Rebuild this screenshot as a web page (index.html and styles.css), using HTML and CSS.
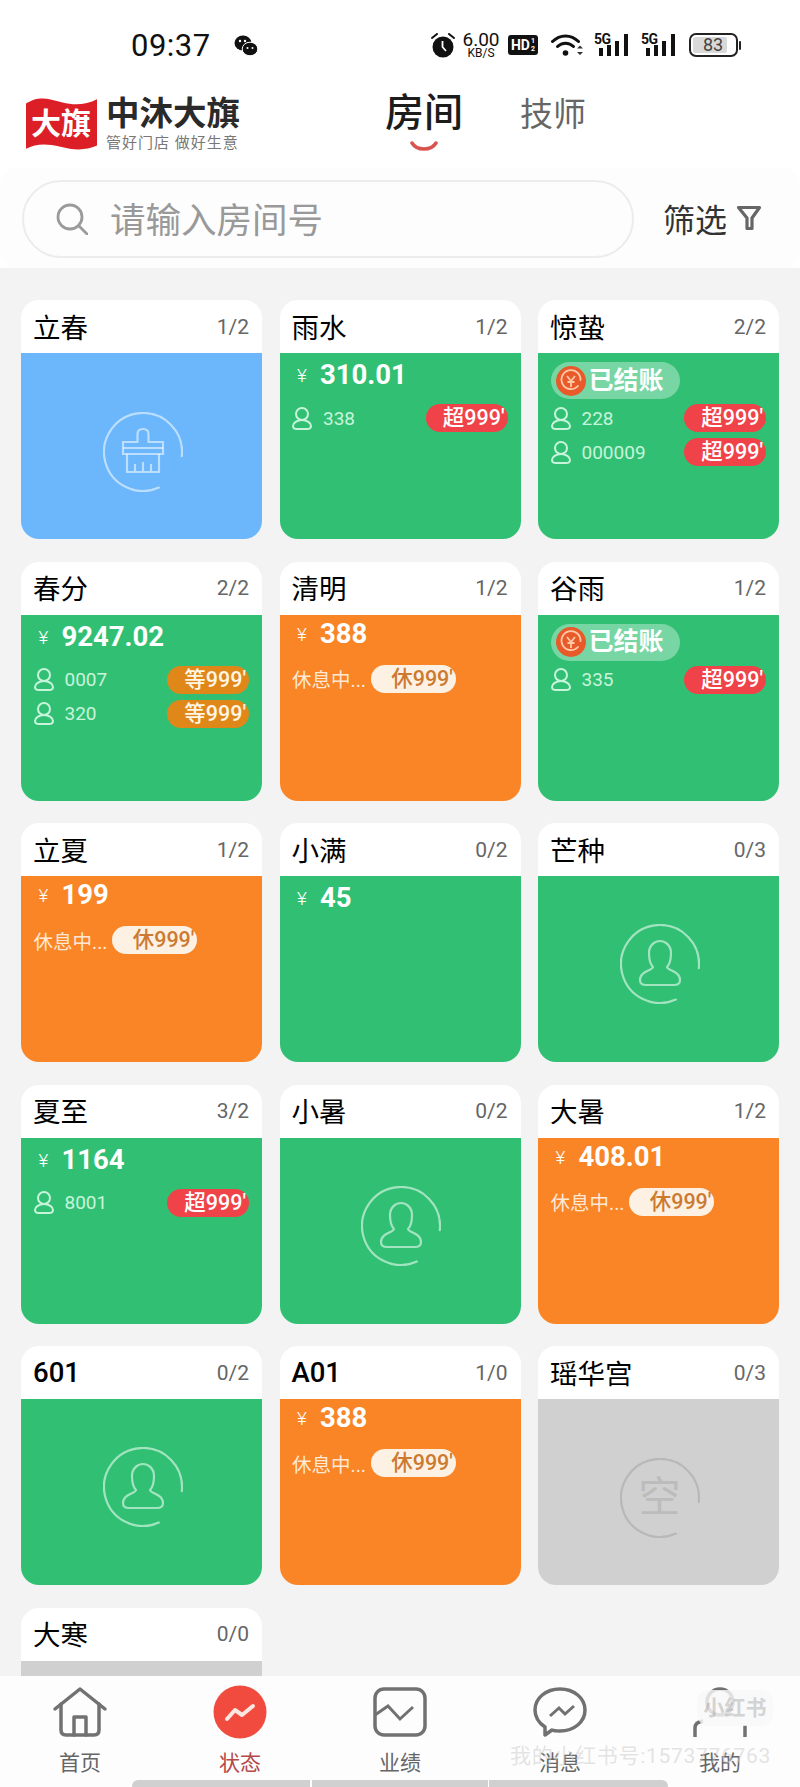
FILE: index.html
```html
<!DOCTYPE html>
<html lang="zh-CN">
<head>
<meta charset="utf-8">
<title>房间状态</title>
<link rel="stylesheet" href="styles.css">
</head>
<body>
<svg class="defs" aria-hidden="true">
  <symbol id="ring" viewBox="0 0 80 80"><path d="M55.9 75.6A39 39 0 1 1 78.8 44.1" fill="none" stroke="currentColor" stroke-width="2.200" stroke-linecap="round"/></symbol>
  <symbol id="guest" viewBox="0 0 80 80"><path d="M33 43C29 39 29 33 29 29C29 22 34 17 40 17C46 17 51 22 51 29C51 33 51 39 47 43C48 47 60 47 60 56C60 60 57 61 54 61L26 61C23 61 20 60 20 56C20 47 32 47 33 43Z" fill="none" stroke="currentColor" stroke-width="2.200"/></symbol>
  <symbol id="broom" viewBox="0 0 80 80"><g fill="none" stroke="currentColor" stroke-width="2.200"><path d="M34.500 30V22Q34.500 17 40 17Q45.500 17 45.500 22V30H60V42H20V30Z"/><path d="M20 36H60"/><path d="M24 42V60H56V42M32 60V52M40 60V50M48 60V52"/></g></symbol>
  <symbol id="user" viewBox="0 0 20 23"><g fill="none" stroke="currentColor" stroke-width="2"><circle cx="10" cy="7" r="6"/><path d="M10 13C5 13 1 16 1 19C1 21 3 22 5 22H15C17 22 19 21 19 19C19 16 15 13 10 13Z"/></g></symbol>
  <symbol id="paid" viewBox="0 0 30 30"><circle cx="15" cy="15" r="15" fill="#e85a2a"/><path d="M22 20A9.500 9.500 0 1 1 24.500 14" fill="none" stroke="#ffc9a8" stroke-width="1.800" stroke-linecap="round"/><path d="M11 10L15 15L19 10M15 15V21M11.500 16H18.500" fill="none" stroke="#ffc9a8" stroke-width="1.800"/></symbol>
</svg>

<header class="top">
  <div class="status">
    <span class="time">09:37</span>
    <svg class="wechat" viewBox="0 0 24 21"><ellipse cx="9" cy="8" rx="8.500" ry="7.500" fill="#111"/><ellipse cx="16" cy="14" rx="7.800" ry="6.800" fill="#111" stroke="#fff" stroke-width="1"/><circle cx="6" cy="6" r="1.200" fill="#fff"/><circle cx="11" cy="6" r="1.200" fill="#fff"/><circle cx="13.500" cy="13" r="1" fill="#fff"/><circle cx="18.500" cy="13" r="1" fill="#fff"/></svg>
    <span class="status-right">
      <svg class="alarm" viewBox="0 0 24 25"><circle cx="12" cy="14" r="10.500" fill="#111"/><path d="M1 5L6 1M23 5L18 1" stroke="#111" stroke-width="2" stroke-linecap="round"/><path d="M11.500 8V14L15 18" fill="none" stroke="#fff" stroke-width="1.800"/></svg>
      <span class="speed"><b>6.00</b><i>KB/S</i></span>
      <span class="hd">HD<span class="hd-frac">1<br>2</span></span>
      <svg class="wifi" viewBox="0 0 33 25"><g fill="none" stroke="#111" stroke-width="3" stroke-linecap="round"><path d="M1.500 8.500C9 1 20 1 27.500 8.500"/><path d="M6.500 13.500C11 9 18 9 22.500 13.500"/></g><circle cx="14.500" cy="20" r="2.800" fill="#111"/><path d="M26 15.500L29 12.500L32 15.500ZM26 19L29 22L32 19Z" fill="#333"/></svg>
      <span class="sim"><span class="sim-label">5G</span><svg class="bars" viewBox="0 0 29 22"><path d="M0 14h4v8H0zM8 11h4v11H8zM16 7h4v15h-4zM25 0h4v22h-4z" fill="#111"/></svg></span>
      <span class="sim"><span class="sim-label">5G</span><svg class="bars" viewBox="0 0 29 22"><path d="M0 14h4v8H0zM8 11h4v11H8zM16 7h4v15h-4zM25 0h4v22h-4z" fill="#111"/></svg></span>
      <span class="battery"><span class="battery-level">83</span></span><span class="battery-tip"></span>
    </span>
  </div>
  <div class="brandbar">
    <div class="logo">
      <svg class="logo-flag" viewBox="0 0 70 50" preserveAspectRatio="none"><path d="M0 6C14 -2 22 2 36 5C48 8 60 7 70 2V45C58 50 46 49 34 46C20 43 10 43 0 48Z" fill="#dc1f26"/></svg>
      <span class="logo-text">大旗</span>
    </div>
    <div class="brand">
      <span class="brand-name">中沐大旗</span>
      <span class="brand-sub">管好门店 做好生意</span>
    </div>
    <nav class="tabs">
      <span class="tab tab-on">房间<svg class="smile" viewBox="0 0 28 11"><path d="M2 2C7 10 21 10 26 2" fill="none" stroke="#d9534f" stroke-width="3.500" stroke-linecap="round"/></svg></span>
      <span class="tab">技师</span>
    </nav>
  </div>
  <div class="searchbar">
    <div class="search">
      <svg class="search-icon" viewBox="0 0 32 32"><circle cx="14" cy="14" r="12" fill="none" stroke="#9a9a9a" stroke-width="2.800"/><path d="M23 23L31 31" stroke="#9a9a9a" stroke-width="2.800" stroke-linecap="round"/></svg>
      <span class="placeholder">请输入房间号</span>
    </div>
    <div class="filter">筛选<svg class="filter-icon" viewBox="0 0 26 26"><path d="M2.500 2.500H23.500L16 13V23.500H11V13Z" fill="none" stroke="#666" stroke-width="3.200" stroke-linejoin="round"/></svg></div>
  </div>
</header>

<main class="list">
  <div class="grid">
    <article class="card">
      <div class="head"><span class="name">立春</span><span class="count">1/2</span></div>
      <div class="body blue center"><div class="ring"><svg class="ring-svg"><use href="#ring"/></svg><svg class="ring-svg"><use href="#broom"/></svg></div></div>
    </article>
    <article class="card">
      <div class="head"><span class="name">雨水</span><span class="count">1/2</span></div>
      <div class="body green">
        <div class="lead"><span class="yen">¥</span><span class="amount">310.01</span></div>
        <div class="row"><span class="who"><svg class="user"><use href="#user"/></svg>338</span><span class="tag over">超999'</span></div>
      </div>
    </article>
    <article class="card">
      <div class="head"><span class="name">惊蛰</span><span class="count">2/2</span></div>
      <div class="body green">
        <div class="lead lead-paid"><span class="paid"><svg class="paid-icon"><use href="#paid"/></svg>已结账</span></div>
        <div class="row"><span class="who"><svg class="user"><use href="#user"/></svg>228</span><span class="tag over">超999'</span></div>
        <div class="row"><span class="who"><svg class="user"><use href="#user"/></svg>000009</span><span class="tag over">超999'</span></div>
      </div>
    </article>

    <article class="card">
      <div class="head"><span class="name">春分</span><span class="count">2/2</span></div>
      <div class="body green">
        <div class="lead"><span class="yen">¥</span><span class="amount">9247.02</span></div>
        <div class="row"><span class="who"><svg class="user"><use href="#user"/></svg>0007</span><span class="tag wait">等999'</span></div>
        <div class="row"><span class="who"><svg class="user"><use href="#user"/></svg>320</span><span class="tag wait">等999'</span></div>
      </div>
    </article>
    <article class="card">
      <div class="head"><span class="name">清明</span><span class="count">1/2</span></div>
      <div class="body orange">
        <div class="lead lead-rest"><span class="yen">¥</span><span class="amount">388</span></div>
        <div class="row row-rest"><span class="resting">休息中...</span><span class="tag rest">休999'</span></div>
      </div>
    </article>
    <article class="card">
      <div class="head"><span class="name">谷雨</span><span class="count">1/2</span></div>
      <div class="body green">
        <div class="lead lead-paid"><span class="paid"><svg class="paid-icon"><use href="#paid"/></svg>已结账</span></div>
        <div class="row"><span class="who"><svg class="user"><use href="#user"/></svg>335</span><span class="tag over">超999'</span></div>
      </div>
    </article>

    <article class="card">
      <div class="head"><span class="name">立夏</span><span class="count">1/2</span></div>
      <div class="body orange">
        <div class="lead lead-rest"><span class="yen">¥</span><span class="amount">199</span></div>
        <div class="row row-rest"><span class="resting">休息中...</span><span class="tag rest">休999'</span></div>
      </div>
    </article>
    <article class="card">
      <div class="head"><span class="name">小满</span><span class="count">0/2</span></div>
      <div class="body green"><div class="lead"><span class="yen">¥</span><span class="amount">45</span></div></div>
    </article>
    <article class="card">
      <div class="head"><span class="name">芒种</span><span class="count">0/3</span></div>
      <div class="body green center-up"><div class="ring"><svg class="ring-svg"><use href="#ring"/></svg><svg class="ring-svg"><use href="#guest"/></svg></div></div>
    </article>

    <article class="card">
      <div class="head"><span class="name">夏至</span><span class="count">3/2</span></div>
      <div class="body green">
        <div class="lead"><span class="yen">¥</span><span class="amount">1164</span></div>
        <div class="row"><span class="who"><svg class="user"><use href="#user"/></svg>8001</span><span class="tag over">超999'</span></div>
      </div>
    </article>
    <article class="card">
      <div class="head"><span class="name">小暑</span><span class="count">0/2</span></div>
      <div class="body green center-up"><div class="ring"><svg class="ring-svg"><use href="#ring"/></svg><svg class="ring-svg"><use href="#guest"/></svg></div></div>
    </article>
    <article class="card">
      <div class="head"><span class="name">大暑</span><span class="count">1/2</span></div>
      <div class="body orange">
        <div class="lead lead-rest"><span class="yen">¥</span><span class="amount">408.01</span></div>
        <div class="row row-rest"><span class="resting">休息中...</span><span class="tag rest">休999'</span></div>
      </div>
    </article>

    <article class="card">
      <div class="head"><span class="name name-latin">601</span><span class="count">0/2</span></div>
      <div class="body green center-up"><div class="ring"><svg class="ring-svg"><use href="#ring"/></svg><svg class="ring-svg"><use href="#guest"/></svg></div></div>
    </article>
    <article class="card">
      <div class="head"><span class="name name-latin">A01</span><span class="count">1/0</span></div>
      <div class="body orange">
        <div class="lead lead-rest"><span class="yen">¥</span><span class="amount">388</span></div>
        <div class="row row-rest"><span class="resting">休息中...</span><span class="tag rest">休999'</span></div>
      </div>
    </article>
    <article class="card">
      <div class="head"><span class="name">瑶华宫</span><span class="count">0/3</span></div>
      <div class="body gray center"><div class="ring ring-gray"><svg class="ring-svg"><use href="#ring"/></svg><span class="kong">空</span></div></div>
    </article>

    <article class="card">
      <div class="head"><span class="name">大寒</span><span class="count">0/0</span></div>
      <div class="body gray"></div>
    </article>
  </div>
</main>

<footer class="nav">
  <div class="nav-items">
    <div class="nav-item">
      <svg class="nav-icon" viewBox="0 0 54 50"><g fill="none" stroke="#717171" stroke-width="3.500" stroke-linecap="round" stroke-linejoin="round"><path d="M2 22L27 2L52 22"/><path d="M8 17V43Q8 48 13 48H41Q46 48 46 43V17"/><path d="M21 48V30H33V48"/></g></svg>
      <span class="nav-label">首页</span>
    </div>
    <div class="nav-item nav-on">
      <svg class="nav-icon" viewBox="0 0 54 50"><ellipse cx="27" cy="25" rx="26.500" ry="26.500" fill="#f04b3e"/><path d="M14 32L22 23L29 28L40 19" fill="none" stroke="#fde6e2" stroke-width="4" stroke-linecap="round" stroke-linejoin="round"/></svg>
      <span class="nav-label">状态</span>
    </div>
    <div class="nav-item">
      <svg class="nav-icon" viewBox="0 0 54 50"><rect x="2" y="2" width="50" height="46" rx="9" fill="none" stroke="#717171" stroke-width="3.500"/><path d="M2 28L15 19L27 32L40 20" fill="none" stroke="#717171" stroke-width="3"/></svg>
      <span class="nav-label">业绩</span>
    </div>
    <div class="nav-item">
      <svg class="nav-icon" viewBox="0 0 54 50"><path d="M27 2C41 2 52 11 52 23C52 35 41 44 27 44C24 44 21 44 19 43L12 48L12 40C6 36 2 31 2 23C2 11 13 2 27 2Z" fill="none" stroke="#717171" stroke-width="3.500" stroke-linejoin="round"/><path d="M17 29L26 21L32 27L41 19" fill="none" stroke="#717171" stroke-width="3"/></svg>
      <span class="nav-label">消息</span>
    </div>
    <div class="nav-item">
      <svg class="nav-icon" viewBox="0 0 54 50"><g fill="none" stroke="#717171" stroke-width="3.500"><circle cx="27" cy="15" r="13"/><path d="M2 50V41Q2 35 10 34M52 38V50"/></g></svg>
      <span class="nav-label">我的</span>
    </div>
  </div>
  <div class="homebar"><span class="seg seg-a"></span><span class="seg seg-b"></span><span class="seg seg-c"></span></div>
  <div class="mark-badge">小红书</div>
  <div class="mark-text">我的小红书号:1573776763</div>
</footer>
</body>
</html>
```

FILE: styles.css
```css
* { box-sizing: border-box; }
html, body { margin: 0; padding: 0; }
body {
  width: 800px;
  height: 1787px;
  overflow: hidden;
  display: flex;
  flex-direction: column;
  background: #f3f3f3;
  color: #111;
  font-family: Roboto, "Noto Sans CJK SC", sans-serif;
}
.defs { width: 0; height: 0; display: block; }

.top { background: #fff; flex: none; }
.status { height: 80px; padding: 10px 0 0 131px; display: flex; align-items: center; }
.time { font-size: 31px; letter-spacing: 0.5px; color: #111; width: 103px; }
.wechat { width: 24px; height: 21px; }
.status-right { margin-left: 173px; display: flex; align-items: center; }
.alarm { width: 24px; height: 25px; }
.speed { margin-left: 6px; width: 40px; display: flex; flex-direction: column; align-items: center; line-height: 1; }
.speed b { font-weight: 400; font-size: 19px; line-height: 16px; }
.speed i { font-style: normal; font-size: 12px; line-height: 11px; }
.hd { margin-left: 7px; width: 30px; height: 20px; border-radius: 3px; background: #111; color: #fff; font-size: 14px; font-weight: 700; display: flex; align-items: center; justify-content: center; }
.hd-frac { font-size: 7px; line-height: 8px; margin-left: 1px; }
.wifi { margin-left: 13px; width: 33px; height: 25px; }
.sim { margin-left: 10px; width: 35px; height: 24px; display: grid; }
.sim + .sim { margin-left: 12px; }
.sim-label { grid-area: 1 / 1; font-size: 14px; font-weight: 700; line-height: 13px; letter-spacing: -0.5px; color: #111; }
.bars { grid-area: 1 / 1; width: 29px; height: 22px; margin: 1px 0 0 5px; }
.battery { margin-left: 13px; width: 49px; height: 24px; border: 2px solid #222; border-radius: 7px; padding: 2px; display: flex; }
.battery-level { width: 34px; background: #d9d9d9; border-radius: 2px; font-size: 18px; line-height: 16px; color: #444; text-align: center; padding-left: 6px; }
.battery-tip { width: 2px; height: 9px; margin-left: 1px; background: #222; border-radius: 1px; }

.brandbar { height: 88px; padding-left: 25px; display: flex; align-items: flex-start; }
.logo { margin-top: 10px; width: 72px; height: 68px; background: #fff; border-radius: 14px; display: grid; place-items: center; }
.logo-flag, .logo-text { grid-area: 1 / 1; }
.logo-flag { width: 71px; height: 54px; }
.logo-text { color: #fff; font-size: 30px; font-weight: 700; line-height: 1; }
.brand { margin-left: 9px; margin-top: 15px; display: flex; flex-direction: column; }
.brand-name { font-size: 33.500px; font-weight: 700; line-height: 38px; color: #2a2a2a; white-space: nowrap; }
.brand-sub { font-size: 15px; line-height: 20px; color: #777; letter-spacing: 1px; white-space: nowrap; }
.tabs { margin-left: 145px; margin-top: 8px; display: flex; align-items: flex-start; }
.tab { font-size: 33px; line-height: 50px; color: #666; margin-left: 57px; margin-top: 2px; }
.tab-on { font-size: 39px; font-weight: 500; color: #1c1c1c; margin-left: 0; margin-top: 0; display: flex; flex-direction: column; align-items: center; }
.smile { width: 28px; height: 11px; margin-top: 3px; }

.searchbar { height: 100px; background: #fdfdfd; border-radius: 16px; padding: 12px 0 10px 22px; display: flex; align-items: flex-start; }
.search { width: 612px; height: 78px; border: 2px solid #ececec; border-radius: 39px; background: #fdfdfd; padding-left: 32px; display: flex; align-items: center; }
.search-icon { width: 32px; height: 32px; }
.placeholder { margin: 4px 0 0 22px; font-size: 35.500px; line-height: 40px; color: #999; }
.filter { margin-left: 29px; margin-top: 19px; font-size: 32px; line-height: 44px; color: #333; display: flex; align-items: center; }
.filter-icon { width: 26px; height: 26px; margin-left: 9px; margin-bottom: 7px; }

.list { flex: 1; min-height: 0; overflow: hidden; padding: 32px 21px 0; }
.grid { display: grid; grid-template-columns: repeat(3, 1fr); column-gap: 17.500px; row-gap: 22.500px; }
.card { height: 239px; border-radius: 18px; overflow: hidden; background: #fff; display: flex; flex-direction: column; }
.head { height: 53px; flex: none; padding: 4px 13px 0 12px; display: flex; align-items: center; justify-content: space-between; }
.name { font-size: 27.500px; font-weight: 400; color: #000; line-height: 36px; }
.name-latin { font-weight: 500; margin-bottom: 4px; }
.count { font-size: 21px; color: #666; margin-bottom: 4px; }
.body { flex: 1; padding: 0 13px 0 12.500px; color: #fff; }
.blue { background: #6cb6fb; }
.green { background: #31c073; }
.orange { background: #f98526; }
.gray { background: #d0d0d0; }
.center { padding: 12px 0 0 2px; display: flex; align-items: center; justify-content: center; }
.center-up { padding: 0 0 10px 2px; display: flex; align-items: center; justify-content: center; }

.ring { display: grid; place-items: center; width: 80px; height: 80px; color: rgba(255, 255, 255, 0.55); }
.ring-svg { grid-area: 1 / 1; width: 80px; height: 80px; }
.ring-gray { color: #b8b8b8; }
.kong { grid-area: 1 / 1; font-size: 42px; font-weight: 400; line-height: 1; color: #bcbcbc; }

.lead { height: 51px; padding: 7px 0 0 5px; display: flex; align-items: flex-start; line-height: 30px; }
.lead-rest { padding-top: 4px; height: 50px; }
.lead-paid { padding: 9px 0 0; }
.yen { font-size: 19px; font-weight: 300; width: 23px; flex: none; line-height: 32px; }
.amount { font-size: 27.500px; font-weight: 700; }
.paid { height: 37px; width: 129px; border-radius: 19px; background: rgba(255, 255, 255, 0.35); padding-left: 5px; display: flex; align-items: center; font-size: 25px; font-weight: 700; color: #fff; }
.paid-icon { width: 30px; height: 30px; margin-right: 3px; flex: none; }

.row { height: 28px; margin-bottom: 6px; display: flex; align-items: center; justify-content: space-between; }
.row-rest { justify-content: flex-start; }
.who { display: flex; align-items: center; font-size: 19px; color: #c8f4dc; }
.user { width: 20px; height: 23px; margin-right: 11px; }
.resting { font-size: 19.500px; color: #ffe9d5; white-space: nowrap; }
.tag { height: 28px; width: 82px; border-radius: 14px; font-size: 21.500px; font-weight: 500; line-height: 28px; text-align: right; padding-right: 3px; }
.over { background: #ef4349; color: #fff; }
.wait { background: #e0871a; color: #fff6e4; }
.rest { background: #fdf1e4; color: #cc7a30; width: 85px; margin-left: 5px; padding-right: 3px; }

.nav { flex: none; height: 111px; background: #fdfdfd; position: relative; display: flex; flex-direction: column; }
.nav-items { display: flex; height: 104px; padding-top: 11px; }
.nav-item { width: 160px; display: flex; flex-direction: column; align-items: center; color: #666; }
.nav-icon { width: 54px; height: 50px; overflow: visible; }
.nav-label { font-size: 21px; line-height: 28px; margin-top: 12px; }
.nav-on { color: #b5494a; }
.homebar { height: 7px; display: flex; justify-content: center; gap: 1.500px; }
.seg { background: #d0d0d0; display: block; }
.seg-a { width: 178px; border-radius: 6px 0 0 0; }
.seg-b { width: 176px; }
.seg-c { width: 179px; border-radius: 0 6px 0 0; }
.mark-badge { position: absolute; left: 697px; top: 14px; width: 76px; height: 36px; border-radius: 12px; background: rgba(248, 248, 248, 0.82); color: rgba(150, 150, 150, 0.4); font-size: 21px; font-weight: 700; line-height: 36px; text-align: center; white-space: nowrap; }
.mark-text { position: absolute; left: 510px; top: 68px; font-size: 21px; letter-spacing: 0.7px; line-height: 24px; color: rgba(205, 205, 205, 0.55); white-space: nowrap; }
```
